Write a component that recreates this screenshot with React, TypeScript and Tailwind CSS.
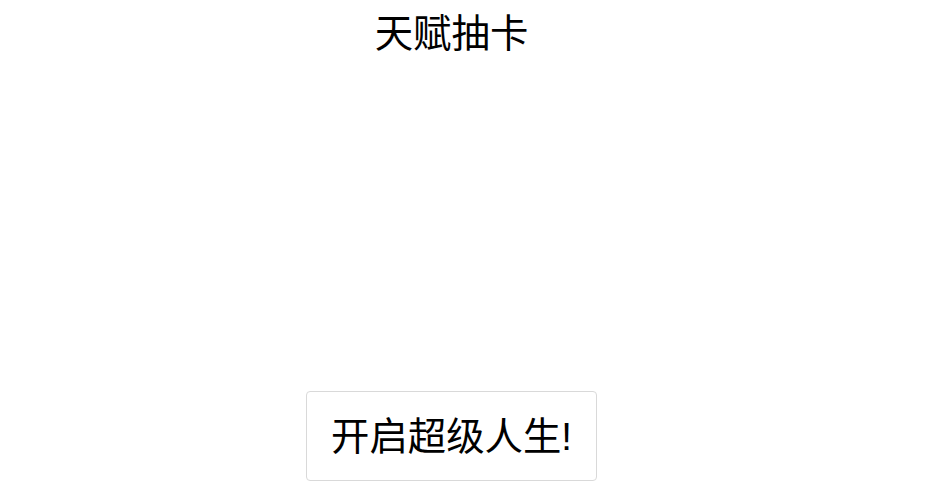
import React from 'react';

export default function App() {
  return (
    <div className="min-h-screen bg-white font-['Liberation_Sans','Noto_Sans_CJK_SC',sans-serif] text-black">
      <div className="w-[903px] flex flex-col items-center">
        <h1 className="mt-[15px] text-[38.4px] leading-[38px] font-normal">天赋抽卡</h1>
        <div className="h-[338px]"></div>
        <button className="w-[291px] h-[90px] pt-[3px] border border-[#d9d9d9] rounded-[4px] bg-white text-[38.4px] leading-none flex items-center justify-center">
          开启超级人生!
        </button>
      </div>
    </div>
  );
}
